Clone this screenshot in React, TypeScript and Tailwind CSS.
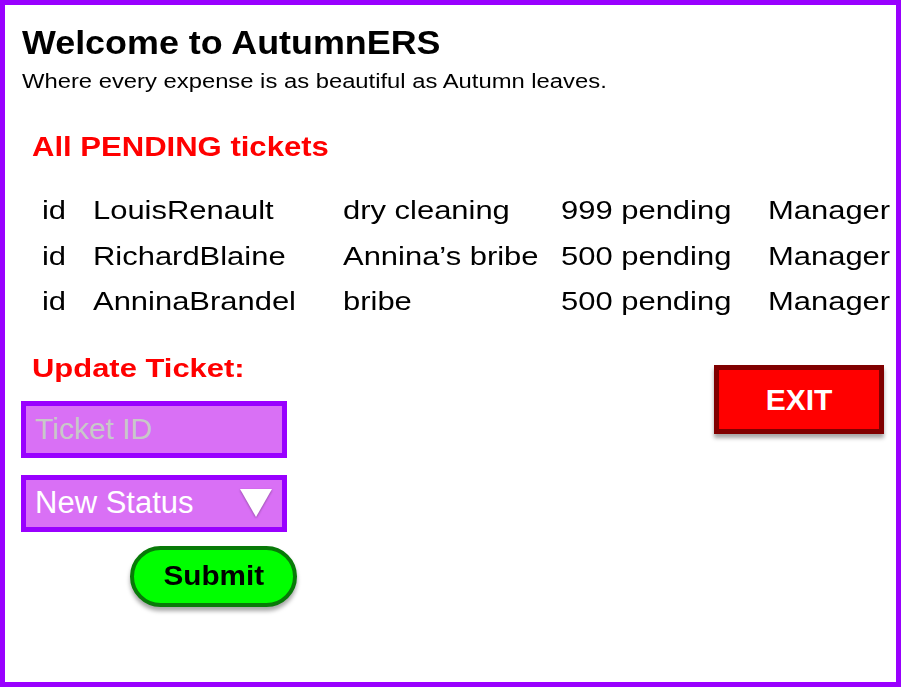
import { useState } from 'react';

const tickets = [
  { id: 'id', author: 'LouisRenault', description: 'dry cleaning', amount: '999 pending', role: 'Manager' },
  { id: 'id', author: 'RichardBlaine', description: 'Annina’s bribe', amount: '500 pending', role: 'Manager' },
  { id: 'id', author: 'AnninaBrandel', description: 'bribe', amount: '500 pending', role: 'Manager' },
];

function Wide({ children, scale = 'scale-x-[1.19]' }: { children: string; scale?: string }) {
  return <span className={`inline-block origin-left whitespace-nowrap ${scale}`}>{children}</span>;
}

export default function App() {
  const [ticketId, setTicketId] = useState('');

  return (
    <div className="w-[901px] h-[687px] border-[5px] border-[#9900ff] bg-white font-['Liberation_Sans',Arial,sans-serif] text-black overflow-hidden">
      <div className="pt-[20px] pl-[16px]">
        {/* Header */}
        <h1 className="ml-[1px] text-[34px] leading-none font-bold">
          <Wide scale="scale-x-[1.055]">Welcome to AutumnERS</Wide>
        </h1>
        <p className="ml-[1px] mt-[12px] text-[20px] leading-none">
          <Wide>Where every expense is as beautiful as Autumn leaves.</Wide>
        </p>

        {/* Pending tickets */}
        <h2 className="ml-[11px] mt-[43px] text-[27px] leading-none font-bold text-[#ff0000]">
          <Wide scale="scale-x-[1.15]">All PENDING tickets</Wide>
        </h2>
        <div className="ml-[21px] mt-[27px] text-[26px] leading-[45.5px]">
          {tickets.map((t, i) => (
            <div key={i} className="grid grid-cols-[51px_250px_218px_207px_1fr] h-[45.5px]">
              <div><Wide>{t.id}</Wide></div>
              <div><Wide>{t.author}</Wide></div>
              <div><Wide>{t.description}</Wide></div>
              <div><Wide>{t.amount}</Wide></div>
              <div><Wide>{t.role}</Wide></div>
            </div>
          ))}
        </div>

        {/* Update section */}
        <div className="mt-[30px] flex justify-between items-start pr-[12px]">
          <div className="w-[266px]">
            <h2 className="ml-[11px] text-[26px] leading-none font-bold text-[#ff0000]">
              <Wide>Update Ticket:</Wide>
            </h2>
            <input
              value={ticketId}
              onChange={(e) => setTicketId(e.target.value)}
              placeholder="Ticket ID"
              className="mt-[20px] block w-[266px] h-[57px] border-[5px] border-[#9900ff] bg-[#d970f5] pl-[9px] text-[30px] text-white placeholder:text-[#c8c8c8] outline-none"
            />
            <button className="mt-[17px] flex items-center justify-between w-[266px] h-[57px] border-[5px] border-[#9900ff] bg-[#d970f5] pl-[9px] pr-[10px] text-[31px] text-white">
              <span>New Status</span>
              <svg width="32" height="29" viewBox="0 0 32 29" className="drop-shadow-[0_1px_1px_rgba(0,0,0,0.35)]">
                <polygon points="0,0 32,0 16,28" fill="#ffffff" />
              </svg>
            </button>
            <button className="mt-[14px] ml-[109px] w-[167px] h-[61px] rounded-full border-[4px] border-[#087a08] bg-[#00ff00] text-[27px] font-bold text-black shadow-[0_4px_4px_rgba(0,0,0,0.35)]">
              <span className="inline-block scale-x-[1.1]">Submit</span>
            </button>
          </div>

          <button className="mt-[10px] w-[170px] h-[69px] border-[5px] border-[#800000] bg-[#ff0000] text-[30px] font-bold text-white shadow-[0_4px_4px_rgba(0,0,0,0.35)]">
            EXIT
          </button>
        </div>
      </div>
    </div>
  );
}
